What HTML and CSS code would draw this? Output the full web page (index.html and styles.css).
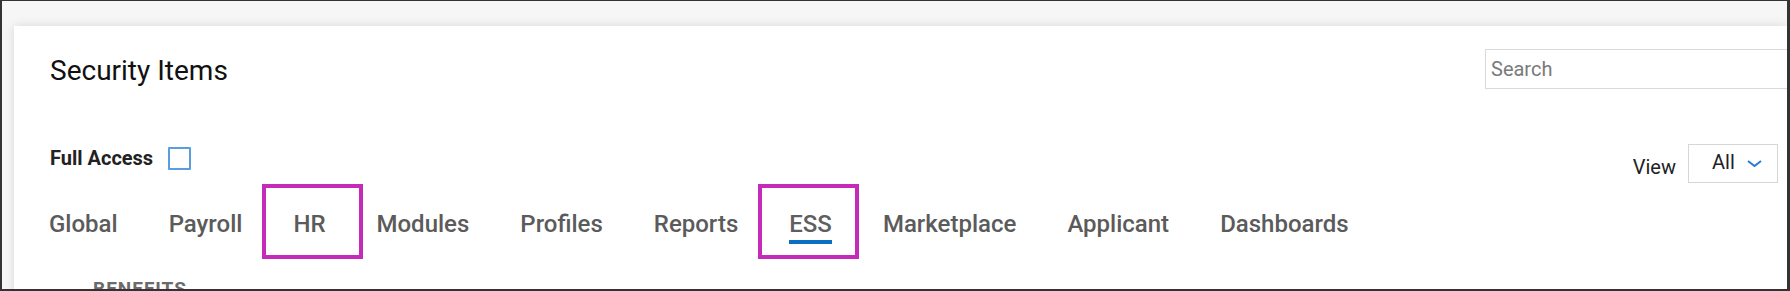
FILE: index.html
```html
<!DOCTYPE html>
<html>
<head>
<meta charset="utf-8">
<title>Security Items</title>
<link rel="stylesheet" href="styles.css">
</head>
<body>
<div class="shot">
  <div class="card">
    <div class="header">
      <h1 class="title">Security Items</h1>
      <input class="search" type="text" placeholder="Search">
    </div>

    <div class="options">
      <label class="full-access">Full Access <span class="check"></span></label>
      <div class="view">
        <span class="view-label">View</span>
        <div class="select">All
          <svg class="chev" width="15" height="7" viewBox="0 0 15 7"><path d="M1 1 L7.5 6 L14 1" fill="none" stroke="#2a7bd0" stroke-width="2"/></svg>
        </div>
      </div>
    </div>

    <ul class="tabs">
      <li class="tab">Global</li>
      <li class="tab">Payroll</li>
      <li class="tab marked">HR</li>
      <li class="tab">Modules</li>
      <li class="tab">Profiles</li>
      <li class="tab">Reports</li>
      <li class="tab active marked">ESS</li>
      <li class="tab">Marketplace</li>
      <li class="tab">Applicant</li>
      <li class="tab">Dashboards</li>
    </ul>

    <h5 class="section">BENEFITS</h5>
  </div>
</div>
</body>
</html>
```

FILE: styles.css
```css
body { margin:0; font-family:Roboto, "Liberation Sans", sans-serif; }

.shot { width:1790px; height:291px; box-sizing:border-box; overflow:hidden;
        border:2px solid #333; border-top-width:1px; border-right-width:3px;
        background:#f6f6f6; padding:25px 0 0 12px; }

.card { background:#fff; box-shadow:0 0 10px rgba(0,0,0,.12); padding:23px 9px 40px 36px; overflow:hidden; }

.header { display:flex; justify-content:space-between; align-items:flex-start; }
.title { margin:8px 0 0; font-size:28px; line-height:28px; font-weight:400; color:#111; }
.search { width:333px; height:40px; box-sizing:border-box; margin-right:-40px; border:1px solid #d9d9d9;
          padding:0 5px; font-family:Roboto, sans-serif; font-size:20px; color:#333; outline:none; }
.search::placeholder { color:#7a7a7a; }

.options { display:flex; justify-content:space-between; align-items:flex-start; margin-top:55px; }
.full-access { display:flex; align-items:center; gap:15px; margin-top:3px; font-size:20px; line-height:23px; font-weight:700; color:#222; }
.check { width:23px; height:23px; box-sizing:border-box; border:2px solid #5a9ee0; border-radius:1px; }

.view { display:flex; align-items:center; gap:12px; }
.view-label { font-size:20px; color:#222; padding-top:6px; }
.select { display:flex; align-items:center; gap:12px; height:39px; box-sizing:border-box; width:90px;
          border:1px solid #d6d6d6; padding:0 0 3px 23px; font-size:20px; color:#222; }
.chev { margin-top:3px; }

.tabs { display:flex; gap:51px; list-style:none; margin:29px 0 0 -1px; padding:0; }
.tab { position:relative; font-size:24px; line-height:24px; font-weight:500; color:#5b5b5b; padding-bottom:8px; }
.tab.active { color:#5f5f5f; }
.tab.active::before { content:""; position:absolute; left:0; right:0; bottom:0; height:4px; background:#0b6fc4; }
.tab.marked::after { content:""; position:absolute; left:-31px; top:-28px; width:101px; height:75px;
                     box-sizing:border-box; border:4px solid #c42bb8; }

.section { margin:35px 0 0 43px; font-size:19px; line-height:19px; font-weight:700; letter-spacing:1px; color:#6b6b6b; }
```
